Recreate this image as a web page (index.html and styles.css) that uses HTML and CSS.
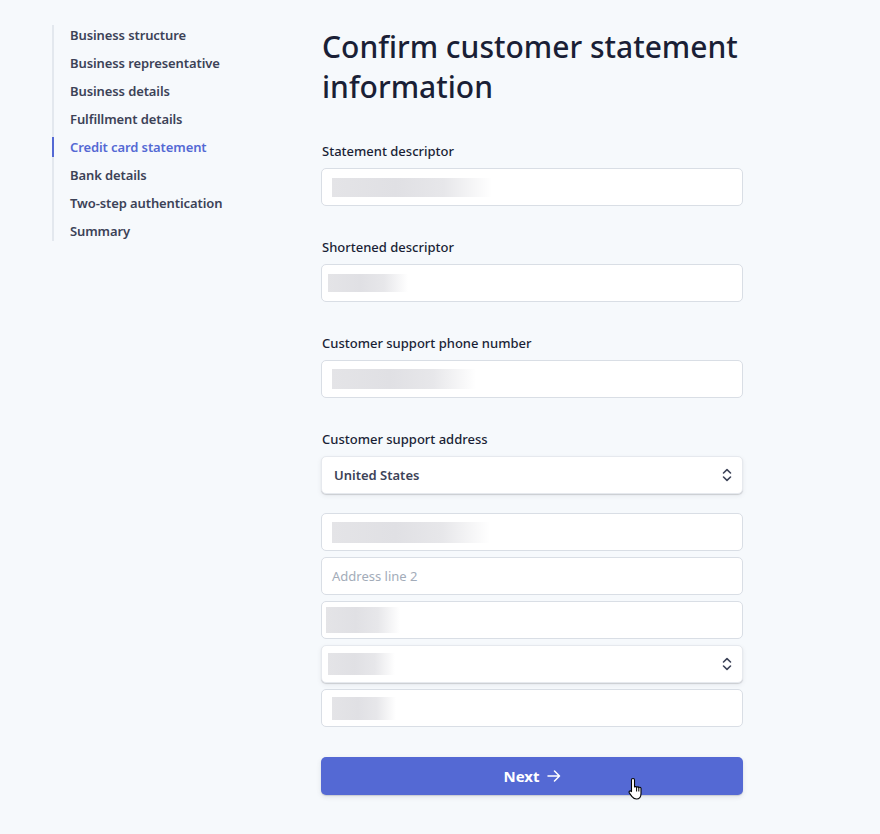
FILE: index.html
```html
<!DOCTYPE html>
<html lang="en">
<head>
<meta charset="utf-8">
<title>Confirm customer statement information</title>
<link rel="stylesheet" href="styles.css">
</head>
<body>
<div class="page">
  <nav class="steps">
    <ul class="step-list">
      <li class="step">Business structure</li>
      <li class="step">Business representative</li>
      <li class="step">Business details</li>
      <li class="step">Fulfillment details</li>
      <li class="step active">Credit card statement</li>
      <li class="step">Bank details</li>
      <li class="step">Two-step authentication</li>
      <li class="step">Summary</li>
    </ul>
  </nav>
  <main class="main">
    <h1 class="title">Confirm customer statement information</h1>

    <div class="field">
      <label class="label">Statement descriptor</label>
      <div class="input"><span class="blur b1"></span></div>
    </div>

    <div class="field">
      <label class="label">Shortened descriptor</label>
      <div class="input"><span class="blur b2"></span></div>
    </div>

    <div class="field">
      <label class="label">Customer support phone number</label>
      <div class="input"><span class="blur b3"></span></div>
    </div>

    <div class="field">
      <label class="label">Customer support address</label>
      <div class="input select"><span class="value">United States</span>
        <svg class="chev" width="10" height="14" viewBox="0 0 10 14"><path d="M1.5 5 L5 1.6 L8.5 5 M1.5 9 L5 12.4 L8.5 9" fill="none" stroke="#3c4257" stroke-width="1.6" stroke-linecap="round" stroke-linejoin="round"/></svg>
      </div>
      <div class="address">
        <div class="input"><span class="blur b4"></span></div>
        <div class="input"><span class="placeholder">Address line 2</span></div>
        <div class="input tight"><span class="blur b5"></span></div>
        <div class="input select tight"><span class="blur b6"></span>
          <svg class="chev" width="10" height="14" viewBox="0 0 10 14"><path d="M1.5 5 L5 1.6 L8.5 5 M1.5 9 L5 12.4 L8.5 9" fill="none" stroke="#3c4257" stroke-width="1.6" stroke-linecap="round" stroke-linejoin="round"/></svg>
        </div>
        <div class="input"><span class="blur b7"></span></div>
      </div>
    </div>

    <div class="actions">
      <button class="next">Next
        <svg width="14" height="12" viewBox="0 0 14 12"><path d="M1 6 H12.5 M7.5 1 L12.5 6 L7.5 11" fill="none" stroke="#fff" stroke-width="1.5" stroke-linecap="round" stroke-linejoin="round"/></svg>
      </button>
      <svg class="cursor" width="18" height="24" viewBox="0 0 18 24">
        <path d="M5 1.5 C5.9 1.5 6.5 2.1 6.5 3 V10 C6.9 9.4 8.3 9.4 8.6 10.4 C9 9.6 10.5 9.6 10.8 10.7 C11.2 10 12.8 10.1 13 11.3 V16.5 C13 19.5 11.3 22 8.4 22 C6.3 22 5 21 3.8 19.4 L1.3 15.9 C0.8 15.1 1.1 14.3 1.8 14 C2.5 13.7 3.1 14 3.5 14.6 L3.5 3 C3.5 2.1 4.1 1.5 5 1.5 Z" fill="#fff" stroke="#000" stroke-width="1.1" stroke-linejoin="round"/>
        <path d="M8.6 10.6 V14.5 M10.8 10.9 V14.5" stroke="#000" stroke-width="1" fill="none"/>
      </svg>
    </div>
  </main>
</div>
</body>
</html>
```

FILE: styles.css
```css
* { box-sizing: border-box; }

html, body {
  margin: 0;
  padding: 0;
  background: #f6f9fc;
}

body {
  font-family: "Noto Sans", "Open Sans", sans-serif;
  color: #1a1f36;
  width: 880px;
  height: 834px;
  overflow: hidden;
}

.page {
  display: flex;
  align-items: flex-start;
  padding-left: 52px;
}

.steps {
  width: 269px;
  padding-top: 25px;
  flex: none;
}

.step-list {
  list-style: none;
  margin: 0;
  padding: 0;
  border-left: 2px solid #e3e8ee;
  width: 200px;
  display: flex;
  flex-direction: column;
  gap: 8px;
}

.step {
  height: 20px;
  line-height: 20px;
  padding: 0 0 0 16px;
  margin-left: -2px;
  border-left: 2px solid transparent;
  font-size: 13px;
  font-weight: 600;
  color: #3c4257;
  display: flex;
  align-items: center;
  letter-spacing: -0.1px;
}

.step.active {
  color: #5469d4;
  border-left-color: #5469d4;
}

.main {
  width: 422px;
  flex: none;
  padding-top: 27px;
  position: relative;
}

.title {
  margin: 0 0 34px 1px;
  font-size: 30px;
  line-height: 40px;
  font-weight: 500;
  color: #1a1f36;
  letter-spacing: 0;
}

.field {
  margin-bottom: 31px;
}

.label {
  display: block;
  font-size: 13px;
  font-weight: 500;
  line-height: 20px;
  margin: 0 0 7px 1px;
  color: #1a1f36;
  letter-spacing: 0;
}

.input {
  height: 38px;
  background: #fff;
  border: 1px solid #d9dee5;
  border-radius: 5px;
  display: flex;
  align-items: center;
  padding: 0 10px;
  position: relative;
}

.select {
  border-color: #e6e9ee;
  box-shadow: 0 1px 1px rgba(0, 0, 0, 0.14), 0 2px 5px rgba(60, 66, 87, 0.08);
  padding: 0 12px;
  justify-content: space-between;
}

.value {
  font-size: 13px;
  font-weight: 600;
  color: #3c4257;
}

.placeholder {
  font-size: 13px;
  color: #a3acb9;
}

.chev {
  flex: none;
  margin-right: -2px;
}

.address {
  display: flex;
  flex-direction: column;
  gap: 6px;
  margin-top: 19px;
}

.tight { padding-left: 4px; }

.blur {
  display: block;
  height: 19px;
  background: linear-gradient(90deg, #e4e4e7 0%, #e0e0e4 40%, #e7e7ea 70%, #ffffff 100%);
}

.b1 { width: 160px; }
.b2 { width: 80px; height: 18px; margin-left: -4px; }
.b3 { width: 144px; height: 20px; }
.b4 { width: 158px; height: 21px; }
.b5 { width: 74px; height: 26px; }
.b6 { width: 67px; height: 22px; margin-left: 2px; }
.b7 { width: 64px; height: 23px; }

.actions {
  position: relative;
  margin-top: -1px;
}

.next {
  width: 100%;
  height: 38px;
  border: none;
  border-radius: 5px;
  background: #5469d4;
  color: #fff;
  font-family: "Noto Sans", "Open Sans", sans-serif;
  font-size: 15px;
  font-weight: 700;
  display: flex;
  align-items: center;
  justify-content: center;
  gap: 7px;
  box-shadow: 0 1px 1px rgba(0, 0, 0, 0.12), 0 2px 5px rgba(60, 66, 87, 0.12);
  padding: 0 0 1px 0;
}

.cursor {
  position: absolute;
  left: 307px;
  top: 20px;
}
```
